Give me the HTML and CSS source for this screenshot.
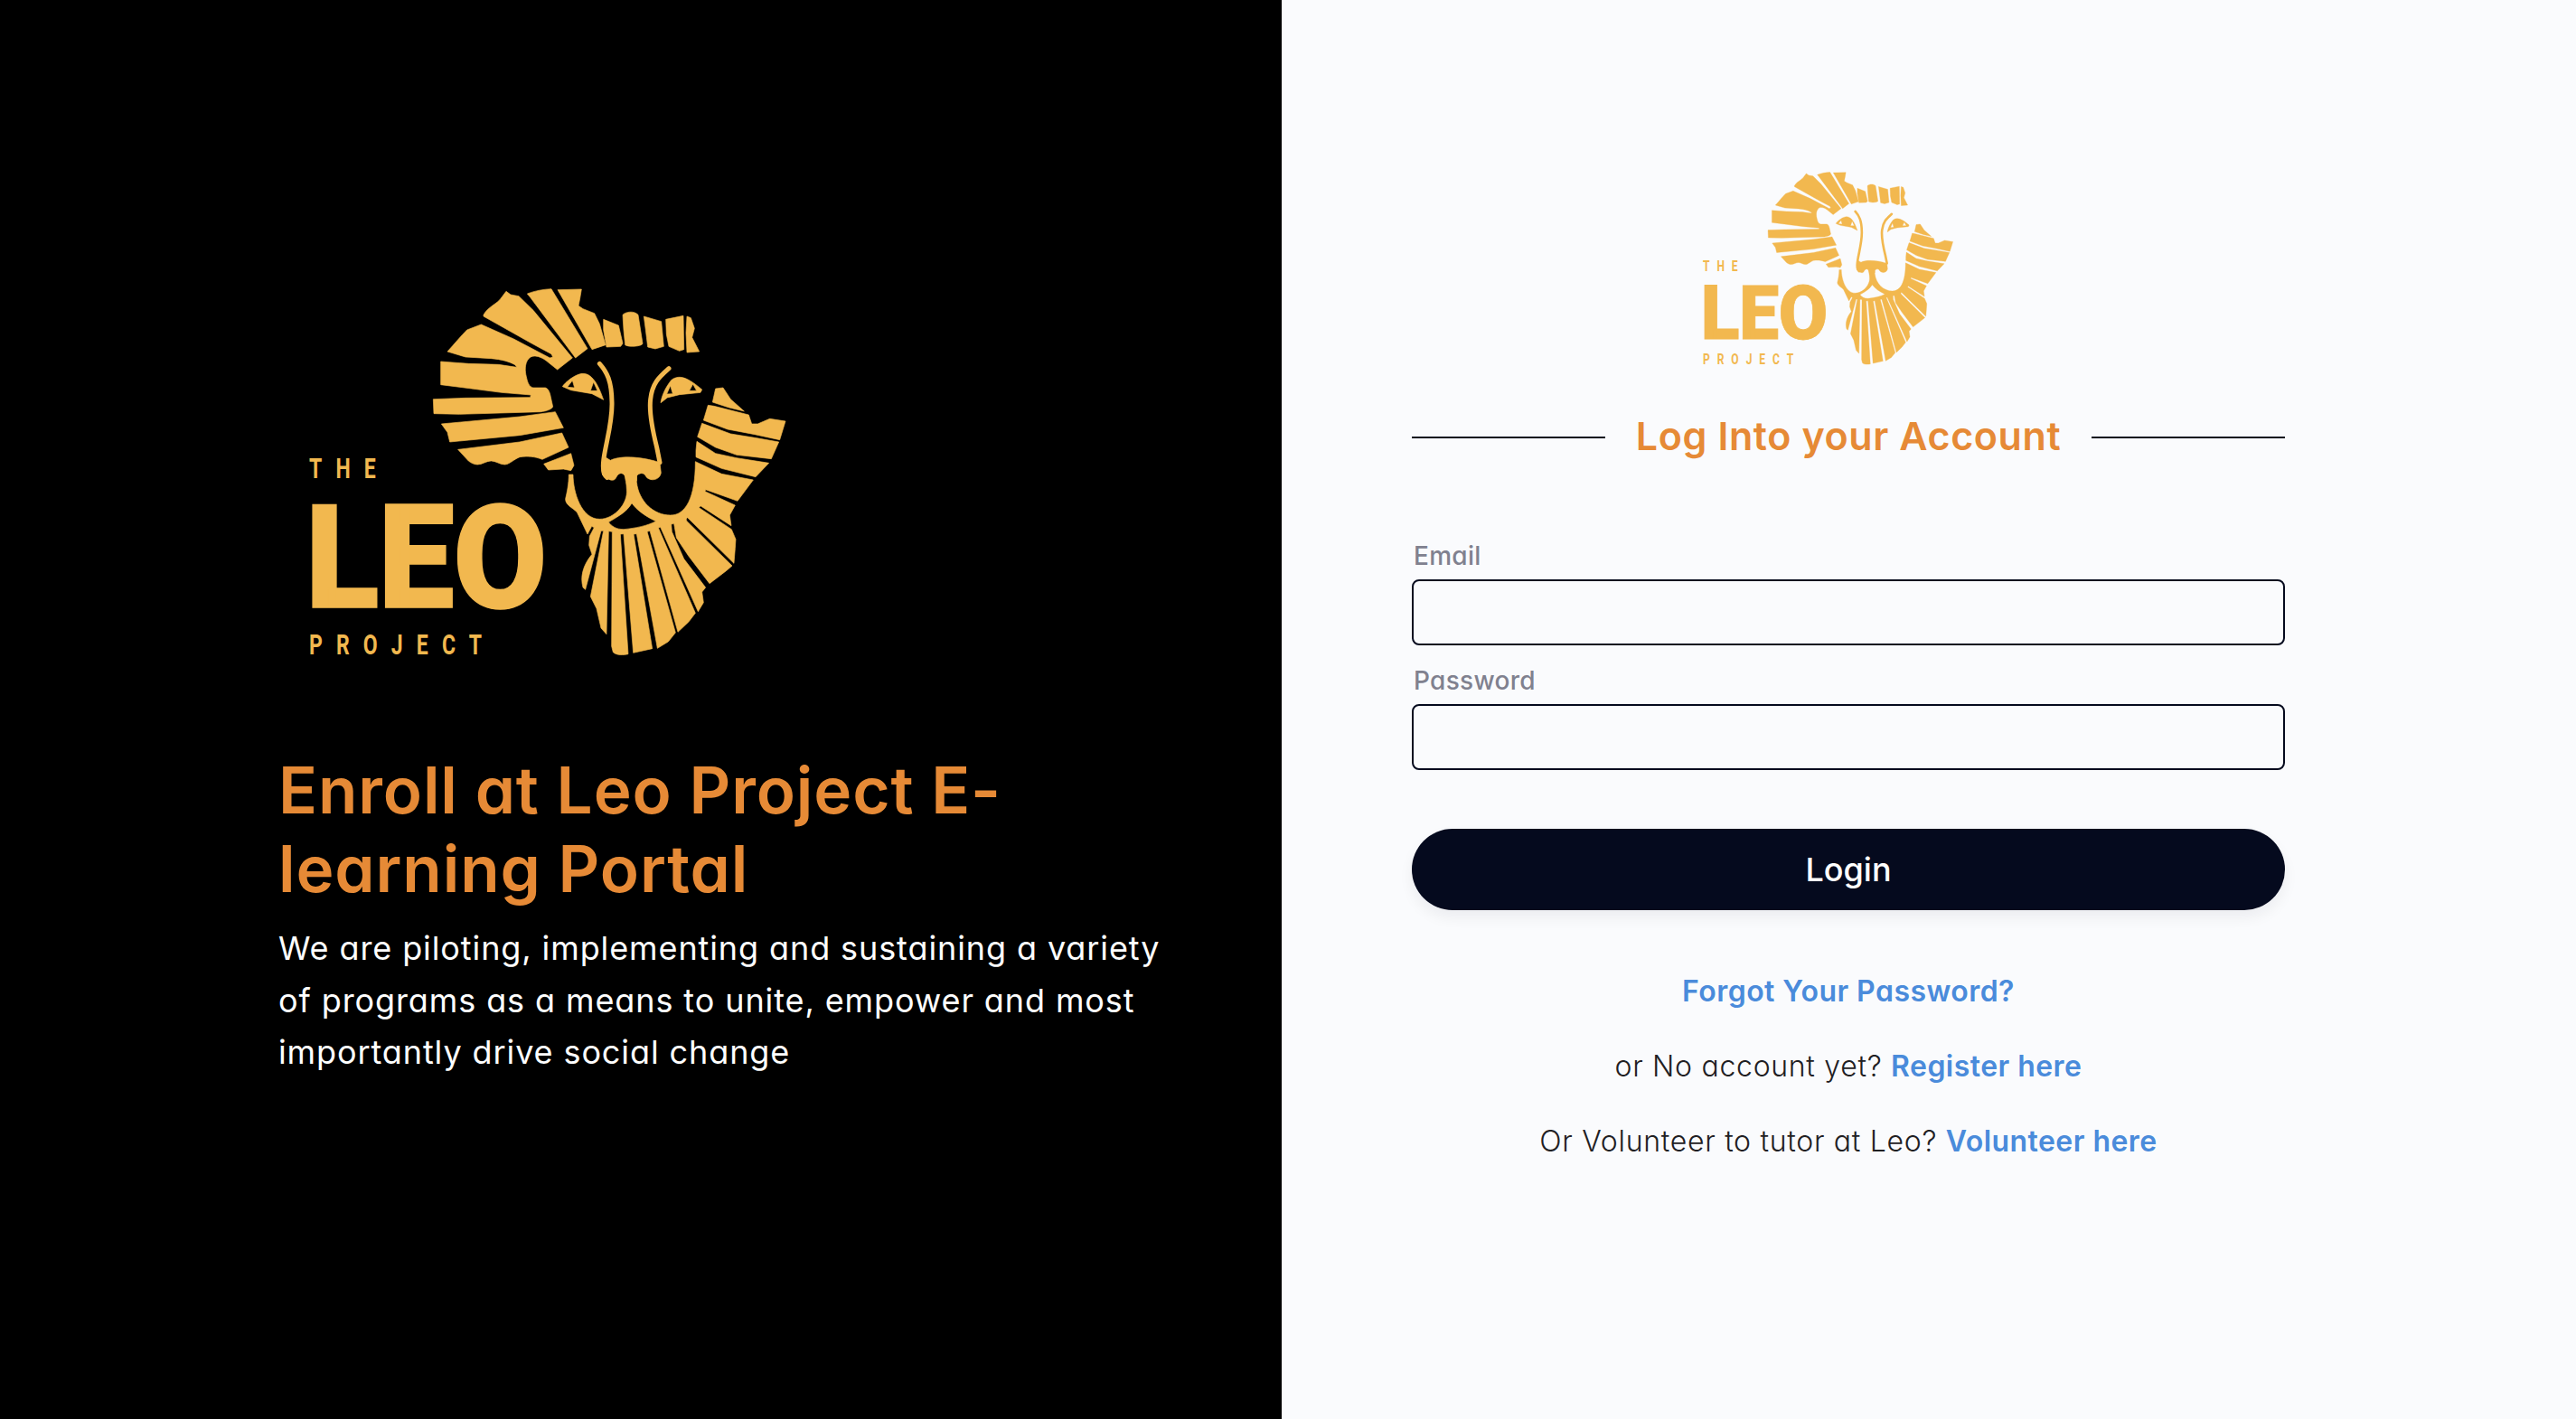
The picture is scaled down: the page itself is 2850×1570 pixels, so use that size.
FILE: index.html
```html
<!DOCTYPE html>
<html lang="en">
<head>
<meta charset="utf-8">
<title>Leo Project E-learning Portal</title>
<link rel="stylesheet" href="styles.css">
</head>
<body>
<main class="page">
  <section class="intro">
    <svg class="logo logo-large" viewBox="308 290 592 460" aria-label="The Leo Project">
      <g id="leo-mark" class="logo-mark">
        <g transform="translate(475 315) scale(.33333)">
          <path d="M180,100 C195,72 225,65 240,42 L255,22 L270,33 L297,38 L345,85 L475,243 L425,282 L395,258 C375,240 345,228 330,245 C315,262 318,290 322,305 C326,325 332,340 345,342 L385,342 C397,345 401,362 404,378 L410,405 C405,415 385,420 370,422 L100,430 L15,428 L13,380 L120,376 L335,374 L337,366 L240,358 L140,345 L38,332 L38,300 L38,255 L130,262 L230,265 L290,274 L285,266 C265,255 240,248 205,245 L120,240 L60,222 C85,195 105,170 125,150 L172,132 L280,180 L400,243 L410,240 L405,230 L340,195 L180,105 Z"/>
          <path d="M325,30 C350,20 380,15 405,14 L525,212 L485,243 L335,42 Z"/>
          <path d="M426,17 L505,15 L500,45 L495,70 L510,80 L548,95 L565,130 L585,200 L540,215 Z"/>
          <path d="M40,462 L300,438 L418,422 L445,475 L300,500 L68,522 L60,490 Z"/>
          <path d="M95,547 L300,522 L440,492 L462,540 L375,580 C350,570 325,568 300,572 C280,580 265,597 250,597 C235,597 220,585 205,585 C190,585 175,597 160,597 C150,597 138,592 130,585 Z"/>
          <path d="M380,595 L470,560 L480,600 L470,617 L445,612 L395,615 Z"/>
          <path fill-rule="evenodd" d="M442,338 C450,325 485,295 510,295 C545,295 565,345 578,382 L540,362 L470,350 Z M458,340 L475,318 L482,342 Z M535,352 L545,323 L558,352 Z"/>
          <path class="logo-line" d="M565,262 C590,290 605,320 606,390 C608,450 590,510 580,570 C575,600 575,630 590,640"/>
        </g>
        <g transform="translate(675 315) scale(.33333)">
          <path d="M-22,115 L28,135 L42,195 L35,205 L-12,207 L-22,150 Z"/>
          <path d="M42,100 C50,90 80,85 93,100 L108,195 C108,205 60,208 50,200 L45,150 Z"/>
          <path d="M112,105 L170,122 L178,205 L150,213 L125,207 L118,150 Z"/>
          <path d="M185,115 L243,103 L245,215 L230,220 L195,205 L187,165 Z"/>
          <path d="M255,105 L268,110 L280,145 L272,175 L296,222 L255,225 L252,160 Z"/>
          <path fill-rule="evenodd" d="M168,392 C172,360 195,325 205,315 C235,295 265,315 305,348 L300,358 L230,365 L190,375 Z M188,363 L200,335 L208,362 Z M263,352 L275,330 L287,352 Z"/>
          <path class="logo-line" d="M195,278 C165,305 140,325 134,380 C128,430 145,500 155,540 L165,590"/>
          <path d="M340,390 L350,345 L375,342 L400,380 L445,420 L395,408 Z"/>
          <path d="M310,450 L325,400 L345,403 L460,432 L470,462 L490,462 L530,445 L582,453 L563,515 L480,497 L390,480 Z"/>
          <path d="M290,505 L305,460 L400,495 L480,508 L560,522 L535,578 L420,565 L350,540 Z"/>
          <path d="M285,550 L288,520 L350,560 L420,575 L527,592 L483,638 L370,610 L285,572 Z"/>
        </g>
        <g transform="translate(610 525) scale(.33333)">
          <path d="M196,-47 C225,-62 290,-62 360,-40 L364,-5 C360,18 330,25 315,8 C308,-10 290,-5 283,5 L283,20 L250,20 L245,5 C235,-10 222,-5 215,10 C208,28 185,15 170,2 C165,-15 170,-40 175,-60 Z"/>
          <path fill-rule="evenodd" d="M58,0 L72,0 C72,60 100,148 160,148 C210,148 255,95 250,50 C250,30 245,15 243,0 L283,0 L283,25 C290,90 340,135 395,135 C445,135 478,80 478,-43 L565,-2 L670,18 L618,88 L512,50 L510,56 L610,102 L592,135 L597,170 L495,104 L490,110 L598,182 L612,215 L610,245 L606,295 L452,143 C447,147 447,150 450,155 L600,303 L580,320 L525,362 L455,270 L415,210 L407,163 L398,165 L400,190 L440,280 L512,375 L500,390 L505,425 L487,455 L362,175 L355,177 L478,460 L455,490 L420,523 L327,187 L318,190 L412,525 L388,555 L352,577 L283,197 L273,198 L335,578 L272,592 L240,197 L229,198 L255,596 C240,600 215,600 205,590 L200,570 L202,190 L190,188 L183,530 L165,510 L150,445 L130,405 L173,187 L165,187 L113,382 L105,375 C95,340 105,300 135,265 L125,235 L127,205 L142,176 L134,172 L120,198 L85,125 C70,110 45,100 47,80 C52,60 58,30 58,0 Z M190,158 C220,140 250,125 267,95 C285,120 315,140 347,155 C320,170 280,178 240,182 C215,182 200,172 190,158 Z"/>
        </g>
        <text class="logo-small-text" transform="translate(342 529) scale(.72 1)">THE</text>
        <text class="logo-word" transform="translate(338 671.5) scale(.945 1)">LEO</text>
        <text class="logo-small-text" transform="translate(342 724) scale(.72 1)">PROJECT</text>
      </g>
    </svg>
    <h1 class="intro-title">Enroll at Leo Project E-<br>learning Portal</h1>
    <p class="intro-text">We are piloting, implementing and sustaining a variety<br>of programs as a means to unite, empower and most<br>importantly drive social change</p>
  </section>
  <section class="auth">
    <form class="auth-form">
      <svg class="logo logo-compact" viewBox="308 290 592 460" aria-label="The Leo Project"><use href="#leo-mark"/></svg>
      <div class="auth-heading">
        <span class="auth-rule"></span>
        <h2 class="auth-title">Log Into your Account</h2>
        <span class="auth-rule"></span>
      </div>
      <label class="field field-first">
        <span class="field-label">Email</span>
        <input class="field-input" type="email">
      </label>
      <label class="field">
        <span class="field-label">Password</span>
        <input class="field-input" type="password">
      </label>
      <button class="login-button" type="button">Login</button>
      <div class="auth-links">
        <p class="auth-line"><a class="auth-link" href="#">Forgot Your Password?</a></p>
        <p class="auth-line">or No account yet? <a class="auth-link" href="#">Register here</a></p>
        <p class="auth-line">Or Volunteer to tutor at Leo? <a class="auth-link" href="#">Volunteer here</a></p>
      </div>
    </form>
  </section>
</main>
</body>
</html>
```

FILE: styles.css
```css
* {
  box-sizing: border-box;
}

html,
body {
  margin: 0;
  padding: 0;
}

body {
  font-family: Inter, "Noto Sans", sans-serif;
  font-feature-settings: "cv11" 1;
  background: #fafbfd;
}

.page {
  display: flex;
  width: 2850px;
  height: 1570px;
  overflow: hidden;
}

.intro {
  flex: 0 0 1418px;
  padding: 290px 0 0 308px;
  background: #000;
}

.logo {
  display: block;
  fill: #f2b84f;
}

.logo-large {
  width: 592px;
  height: 460px;
}

.logo-compact {
  width: 311px;
  height: 241.5px;
  margin-left: 304px;
}

.logo-mark path {
  stroke: #f2b84f;
  stroke-width: 2;
  stroke-linejoin: round;
}

.logo-mark .logo-line {
  fill: none;
  stroke-width: 15;
  stroke-linecap: round;
}

.logo-small-text {
  font-family: Roboto, "Liberation Sans", sans-serif;
  font-size: 32px;
  font-weight: 700;
  letter-spacing: 21px;
  font-feature-settings: normal;
}

.logo-word {
  font-family: Roboto, "Liberation Sans", sans-serif;
  font-size: 159px;
  font-weight: 900;
  letter-spacing: -1px;
  font-feature-settings: normal;
  stroke: #f2b84f;
  stroke-width: 1.5px;
}

.intro-title {
  margin: 81px 0 0;
  color: #e68a36;
  font-size: 71px;
  font-weight: 600;
  letter-spacing: .9px;
  line-height: 87px;
  white-space: nowrap;
}

.intro-text {
  margin: 16px 0 0;
  color: #fff;
  font-size: 36px;
  font-weight: 400;
  letter-spacing: .9px;
  line-height: 57.6px;
  white-space: nowrap;
}

.auth {
  flex: 1;
  padding: 175px 0 0 144px;
}

.auth-form {
  width: 966px;
}

.auth-heading {
  display: flex;
  align-items: center;
  gap: 34px;
  height: 66px;
  margin-top: 34.5px;
}

.auth-rule {
  flex: 1;
  height: 2px;
  background: #050a1e;
}

.auth-title {
  margin: -4px 0 0;
  color: #e68a36;
  font-size: 43px;
  font-weight: 600;
  letter-spacing: .6px;
  white-space: nowrap;
}

.field {
  display: block;
  margin-top: 25px;
}

.field-first {
  margin-top: 83px;
}

.field-label {
  display: block;
  height: 41px;
  padding-left: 2px;
  color: #80818f;
  font-size: 28px;
  font-weight: 500;
  letter-spacing: .3px;
  line-height: 30px;
}

.field-input {
  display: block;
  width: 100%;
  height: 73px;
  border: 2px solid #050a1e;
  border-radius: 8px;
  background: transparent;
}

.field + .field {
  margin-top: 24px;
}

.login-button {
  display: block;
  width: 100%;
  height: 90px;
  margin-top: 65px;
  border: 0;
  border-radius: 45px;
  background: #050a1e;
  box-shadow: 0 8px 16px rgba(5, 10, 30, .06);
  color: #fff;
  font-family: inherit;
  font-feature-settings: inherit;
  font-size: 36px;
  font-weight: 500;
}

.auth-links {
  margin-top: 48px;
}

.auth-line {
  height: 83px;
  margin: 0;
  color: #1f2023;
  font-size: 32px;
  font-weight: 300;
  letter-spacing: .7px;
  line-height: 83px;
  text-align: center;
  white-space: nowrap;
}

.auth-link {
  color: #4a8bdb;
  font-weight: 600;
  letter-spacing: .45px;
  text-decoration: none;
}
```
